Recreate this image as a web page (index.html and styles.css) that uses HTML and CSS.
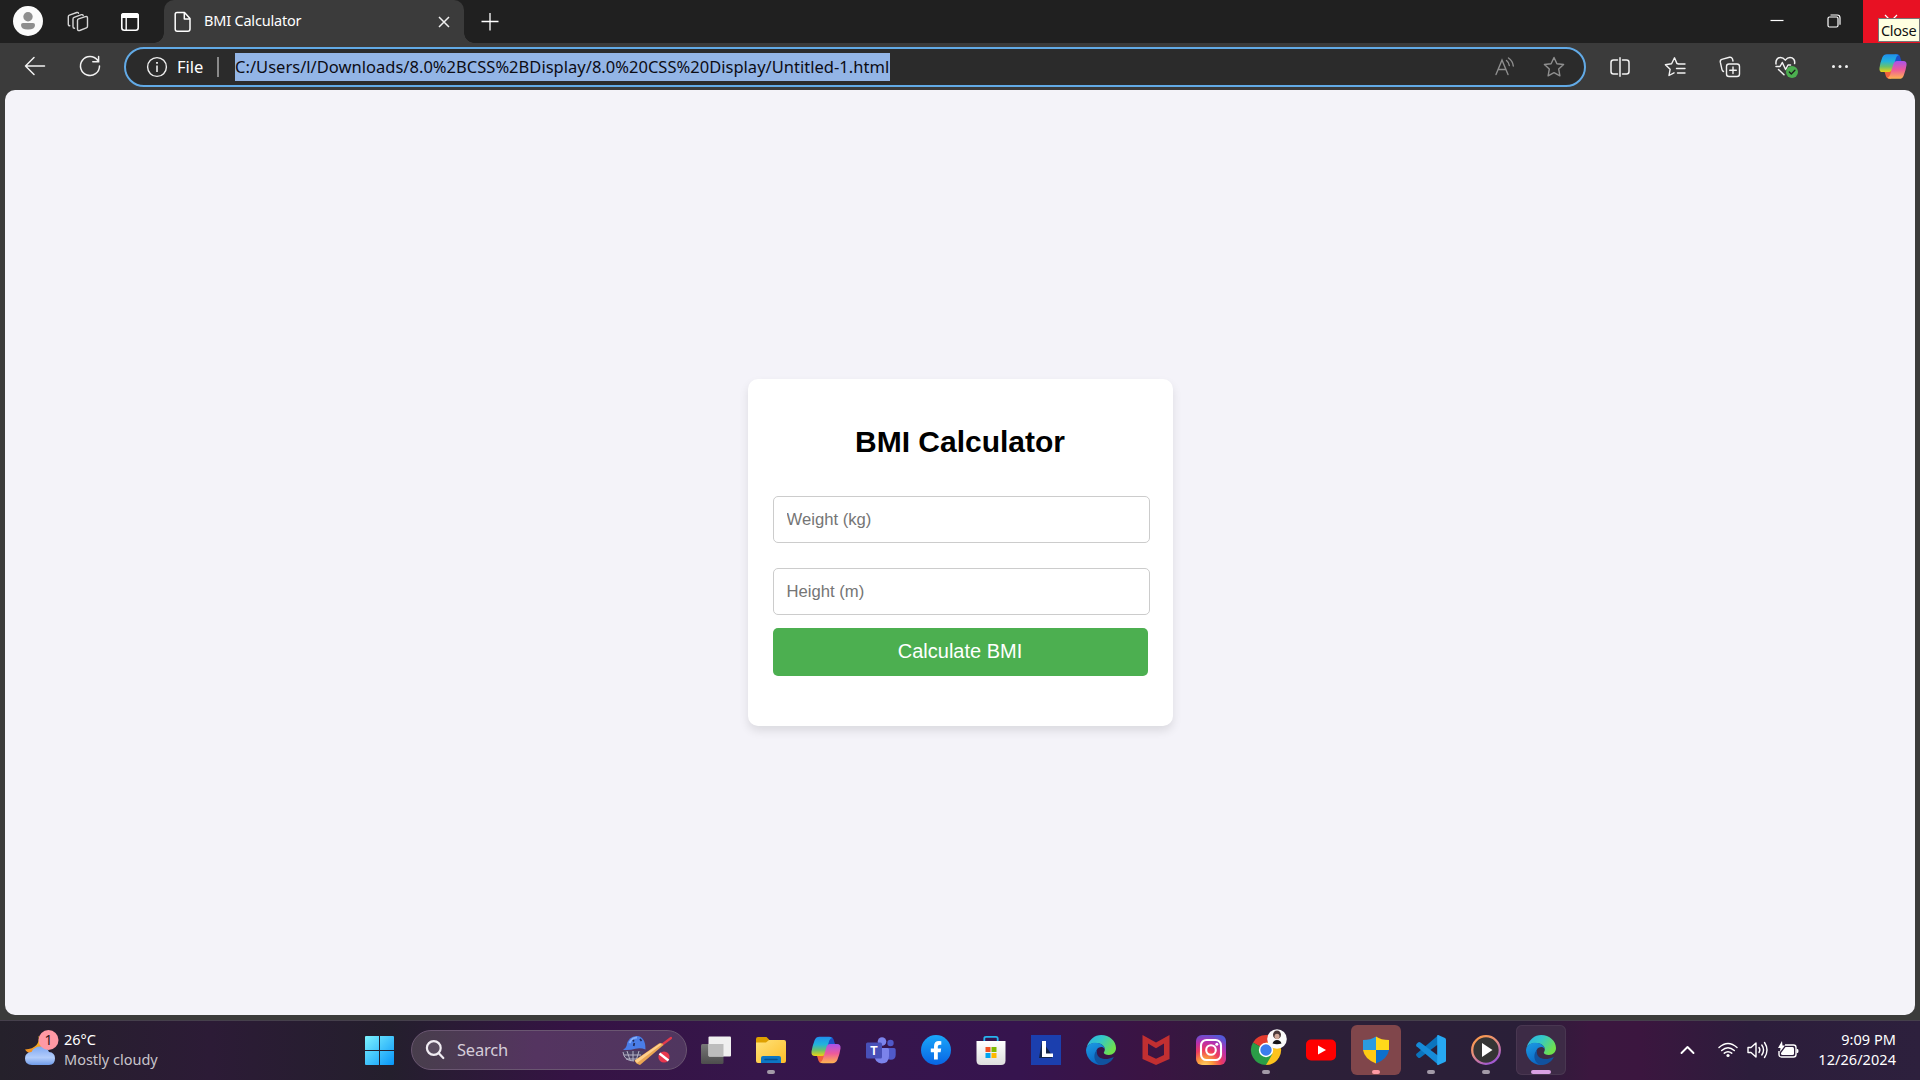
FILE: index.html
```html
<!DOCTYPE html>
<html lang="en">
<head>
<meta charset="utf-8">
<title>BMI Calculator</title>
<link rel="stylesheet" href="styles.css">
</head>
<body>
<svg class="defs" width="0" height="0">
  <defs>
    <linearGradient id="cpBlue" x1="0" y1="0" x2="0" y2="1"><stop offset="0" stop-color="#1f8fee"/><stop offset=".4" stop-color="#22b3dc"/><stop offset=".7" stop-color="#6cc16a"/><stop offset="1" stop-color="#f0d313"/></linearGradient>
    <linearGradient id="cpPink" x1="0" y1="0" x2="0" y2="1"><stop offset="0" stop-color="#a753ec"/><stop offset=".5" stop-color="#ee5a9a"/><stop offset="1" stop-color="#ffb54f"/></linearGradient>
    <linearGradient id="edgeTop" x1="0" y1="0" x2="1" y2=".5"><stop offset="0" stop-color="#2cb0e8"/><stop offset=".5" stop-color="#34c8c8"/><stop offset="1" stop-color="#6fe04e"/></linearGradient>
    <linearGradient id="edgeLow" x1="0" y1="0" x2=".4" y2="1"><stop offset="0" stop-color="#1c9be4"/><stop offset="1" stop-color="#0b68c4"/></linearGradient>
    <linearGradient id="winG" x1="0" y1="0" x2="29" y2="29" gradientUnits="userSpaceOnUse"><stop offset="0" stop-color="#7df3ff"/><stop offset="1" stop-color="#0795f8"/></linearGradient>
    <radialGradient id="igG" cx=".3" cy="1.05" r="1.1"><stop offset="0" stop-color="#ffd86b"/><stop offset=".25" stop-color="#fb9a3c"/><stop offset=".5" stop-color="#ee3b5f"/><stop offset=".75" stop-color="#b92fae"/><stop offset="1" stop-color="#5558d8"/></radialGradient>
    <linearGradient id="folderG" x1="0" y1="0" x2="1" y2="1"><stop offset="0" stop-color="#ffe27a"/><stop offset="1" stop-color="#fdbd28"/></linearGradient>
    <linearGradient id="fbG" x1="0" y1="0" x2="0" y2="1"><stop offset="0" stop-color="#1aa6fa"/><stop offset="1" stop-color="#0864e4"/></linearGradient>
    <linearGradient id="bagG" x1="0" y1="0" x2="0" y2="1"><stop offset="0" stop-color="#ffffff"/><stop offset="1" stop-color="#dedede"/></linearGradient>
    <linearGradient id="ringG" x1="0" y1="0" x2=".6" y2="1"><stop offset="0" stop-color="#ff9b3f"/><stop offset=".5" stop-color="#e8907c"/><stop offset="1" stop-color="#a259d0"/></linearGradient>
    <linearGradient id="cloudG" x1="0" y1="0" x2="0" y2="1"><stop offset="0" stop-color="#7fa8f2"/><stop offset=".6" stop-color="#b3cdfb"/><stop offset="1" stop-color="#6f9be8"/></linearGradient>
    <linearGradient id="moonG" x1="0" y1="0" x2="0" y2="1"><stop offset="0" stop-color="#fac21c"/><stop offset="1" stop-color="#f08a24"/></linearGradient>
    <linearGradient id="greyG" x1="0" y1="0" x2="0" y2="1"><stop offset="0" stop-color="#777"/><stop offset="1" stop-color="#4d4d4d"/></linearGradient>
    <symbol id="copilot" viewBox="0 0 30 28">
      <path d="M17 1h2.500q2.300 0 3 2.200l1.300 4.300q.5 1.500 2 1.500h-6q-3 0-4 3z" fill="#1c50c8"/>
      <path d="M13 27h-2.500q-2.300 0-3-2.200l-1.300-4.300Q5.800 19 4.200 19h6q3 0 4-3z" fill="#f0623c"/>
      <path d="M8.500.8H18q2 0 3 1.200-2 .4-2.800 2.800L14.500 17q-.8 3-3.500 3H4Q0 20 .5 15.500 1 11 3.600 4.200 5 .8 8.500.8z" fill="url(#cpBlue)"/>
      <path d="M21.500 27.200H12q-2 0-3-1.200 2-.4 2.800-2.800L15.500 11q.8-3 3.500-3h7q4 0 3.500 4.500-.5 4.500-3.100 11.300-1.400 3.400-4.900 3.400z" fill="url(#cpPink)"/>
    </symbol>
    <symbol id="edge" viewBox="0 0 30 30">
      <path d="M1 11.500C3 4.800 8.700 0 15.200 0 23.500 0 30 6 30 13c0 4-3 7-7.200 7-3 0-5-1-5-2.200 0-.8 1-1.300 1-3.300C18.800 10.500 14.500 8 10 8 5.500 8 2 9.500 0 14z" fill="url(#edgeTop)"/>
      <path d="M0 15C.5 10.300 4.800 7.700 9.500 7.700c5 0 9.300 2.800 9.300 6.800-.8-2-2.300-2.500-3.600-2.500-3.200 0-5.200 2.800-5.200 6 0 5.200 4.200 11 7.800 11.700A15 15 0 0 1 0 15z" fill="url(#edgeLow)"/>
      <path d="M11.300 14.500C9 22.500 17 24.500 21.300 24c2.700-.4 5-1.400 6.500-2C25.500 27 20.500 30.300 15 30 7.500 28.500 6.500 18.500 11.300 14.500z" fill="#11529e"/>
    </symbol>
  </defs>
</svg>

<div class="browser">
  <div class="titlebar">
    <svg class="avatar" width="30" height="30" viewBox="0 0 30 30"><circle cx="15" cy="15" r="15" fill="#fbfbfb"/><circle cx="15" cy="10.700" r="4.700" fill="#8e8e8e"/><path d="M10 17h10q2 0 2 2 0 4.500-7 4.500T8 19q0-2 2-2z" fill="#8e8e8e"/></svg>
    <svg class="workspaces" width="22" height="22" viewBox="0 0 22 22" fill="none" stroke="#d6d6d6" stroke-width="1.400" stroke-linejoin="round" stroke-linecap="round"><path d="M10.500 9.500q0-1.200 1.100-1.600l6.700-2.300q2.200-.6 2.200 1.400v8.300q0 1.200-1.100 1.600l-6.700 2.600q-2.200.6-2.200-1.400z"/><path d="M7.500 17.300q-1.500 0-1.500-1.500V8q0-1.200 1.100-1.600L14.500 3.700q1.300-.4 1.700.8"/><path d="M2.800 14.800q-1.500 0-1.500-1.500V5.800q0-1.200 1.100-1.600L9.800 1.500q1.300-.4 1.700.8"/></svg>
    <svg class="tab-actions" width="20" height="20" viewBox="0 0 20 20"><rect x="1.800" y="1.800" width="16.400" height="16.400" rx="2.500" fill="none" stroke="#fff" stroke-width="1.600"/><path d="M1 6V3.500Q1 1 3.500 1h13Q19 1 19 3.500V6z" fill="#fff"/><path d="M6.200 6v12" stroke="#fff" stroke-width="1.400"/></svg>
    <div class="tab">
      <svg width="18" height="22" viewBox="0 0 18 22" fill="none" stroke="#fff" stroke-width="1.500" stroke-linejoin="round"><path d="M3 1.500h7.500l5.500 6V18q0 2.300-2.200 2.300H3.200Q1.200 20.300 1.200 18V3.500Q1.200 1.500 3 1.500zM10.300 1.800V8H16"/></svg>
      <span class="tab-title">BMI Calculator</span>
      <svg class="tab-close" width="12" height="12" viewBox="0 0 12 12" stroke="#f0f0f0" stroke-width="1.500"><path d="M1 1l10 10M11 1L1 11"/></svg>
    </div>
    <svg class="new-tab" width="18" height="18" viewBox="0 0 18 18" stroke="#fff" stroke-width="1.300"><path d="M.5 8.500h17M9 0v17.500"/></svg>
    <div class="window-buttons">
      <div class="window-button"><svg width="14" height="14" viewBox="0 0 14 14" stroke="#fff" stroke-width="1.200"><path d="M.5 6.500h13"/></svg></div>
      <div class="window-button"><svg width="14" height="14" viewBox="0 0 14 14" fill="none" stroke="#fff" stroke-width="1.200"><rect x="1" y="3" width="10" height="10" rx="1.500"/><path d="M3.500 1h6.700q2.800 0 2.800 2.800v7"/></svg></div>
      <div class="window-button close"><svg width="14" height="14" viewBox="0 0 14 14" stroke="#fff" stroke-width="1.200"><path d="M1 1l12 12M13 1L1 13"/></svg><span class="tooltip">Close</span></div>
    </div>
  </div>

  <div class="toolbar">
    <div class="nav-button"><svg width="22" height="20" viewBox="0 0 22 20" fill="none" stroke="#f2f2f2" stroke-width="1.500" stroke-linecap="round" stroke-linejoin="round"><path d="M20.500 10H1.500M10 1.500L1.500 10l8.500 8.500"/></svg></div>
    <div class="nav-button"><svg width="22" height="22" viewBox="0 0 22 22" fill="none" stroke="#f2f2f2" stroke-width="1.500" stroke-linecap="round"><path d="M20.500 11A9.500 9.500 0 1 1 18.600 5.300M19.600 1.500v5.300h-5.800"/></svg></div>
    <div class="address">
      <svg width="22" height="22" viewBox="0 0 22 22" fill="none" stroke="#eee" stroke-width="1.400"><circle cx="11" cy="11" r="9.400"/><path d="M11 9.500v6.500" stroke-width="1.600"/><path d="M11 6v1.800" stroke-width="1.800"/></svg>
      <span class="scheme">File</span>
      <span class="separator"></span>
      <span class="url">C:/Users/l/Downloads/8.0%2BCSS%2BDisplay/8.0%20CSS%20Display/Untitled-1.html</span>
      <svg class="read-aloud" width="20" height="20" viewBox="0 0 20 20" fill="none" stroke="#8f8f8f" stroke-width="1.400" stroke-linecap="round"><path d="M1 17.500L7 3l6 14.500M3 12.500h8M11.500 3.500q2.500 2 2.800 5M13.500 1q4.300 3 4.800 8"/></svg>
      <svg class="star" width="22" height="22" viewBox="0 0 22 22" fill="none" stroke="#8f8f8f" stroke-width="1.400" stroke-linejoin="round"><path d="M11 1.500l2.900 6.200 6.700.8-4.900 4.600 1.200 6.700-5.900-3.200-5.900 3.200 1.200-6.700L1.400 8.500l6.700-.8z"/></svg>
    </div>
    <div class="tool"><svg width="20" height="20" viewBox="0 0 20 20" fill="none" stroke="#f2f2f2" stroke-width="1.500" stroke-linecap="round"><path d="M7.500 3h-4Q1 3 1 5.500v9Q1 17 3.500 17h4M12.500 3h4Q19 3 19 5.500v9q0 2.500-2.500 2.500h-4M10 .800v18.400"/></svg></div>
    <div class="tool"><svg width="22" height="22" viewBox="0 0 22 22" fill="none" stroke="#f2f2f2" stroke-width="1.400" stroke-linejoin="round" stroke-linecap="round"><path d="M14 7.800l-1-.2-2.500-5.800-2.900 6-6.200.9 4.700 4.600-1.100 6.200 5-2.700M14 8h7M12.500 12.500H21M13.500 17H21"/></svg></div>
    <div class="tool"><svg width="22" height="22" viewBox="0 0 22 22" fill="none" stroke="#f2f2f2" stroke-width="1.400" stroke-linecap="round"><rect x="7.500" y="8" width="13" height="12.500" rx="2.500"/><path d="M14 11v6.500M10.700 14.200h6.600M4.500 15.500q-1.200-.5-1.500-1.800L1.300 6.200q-.4-2.200 1.500-2.900L10.500 1.300q2.100-.4 2.900 1.500l.6 2.200"/></svg></div>
    <div class="tool"><svg class="heart" width="26" height="24" viewBox="0 0 26 24" fill="none" stroke="#f2f2f2" stroke-width="1.500" stroke-linejoin="round" stroke-linecap="round"><path d="M2 9C1.500 5 3.500 2.500 6.500 2.500c2.200 0 3.500 1 4.800 2.600C12.600 3.500 14 2.500 16 2.500c3.200 0 5.200 2.600 4.600 6M2 11.500h4l2.300-4 3.300 7 2.400-4.500h2.500M4.500 14.500l5.500 5.300"/><circle cx="18" cy="17" r="6" fill="#4caf50" stroke="none"/><path d="M15.300 17l2 2 3.600-3.800" stroke="#1d1d1d" stroke-width="1.300"/></svg></div>
    <div class="tool"><svg width="18" height="6" viewBox="0 0 18 6" fill="#f2f2f2"><circle cx="2.500" cy="2.500" r="1.500"/><circle cx="9" cy="2.500" r="1.500"/><circle cx="15.500" cy="2.500" r="1.500"/></svg></div>
    <div class="tool"><svg width="28" height="27"><use href="#copilot"/></svg></div>
  </div>

  <main class="page">
    <form class="card">
      <h2>BMI Calculator</h2>
      <input class="field" type="text" placeholder="Weight (kg)">
      <input class="field" type="text" placeholder="Height (m)">
      <button class="submit" type="button">Calculate BMI</button>
    </form>
  </main>
</div>

<div class="taskbar">
  <div class="weather">
    <svg width="36" height="38" viewBox="0 0 36 38"><path d="M14.500 7c1.500 7-3 13-13.500 13.500 3 5 12 6 16-1S17 8.500 14.500 7z" fill="url(#moonG)"/><path d="M8 36q-7 0-7-6.500 0-6 6.500-6.500 2.500-5.500 9-5.500 6.500 0 8.500 5.500 6 .5 6 6.500T25 36z" fill="url(#cloudG)"/><circle cx="24.500" cy="11" r="10" fill="#ff99a4"/><text x="24.500" y="16" class="badge-number" text-anchor="middle">1</text></svg>
    <div class="weather-text"><span class="temp">26°C</span><span class="condition">Mostly cloudy</span></div>
  </div>
  <svg class="start" width="29" height="29" viewBox="0 0 29 29" fill="url(#winG)"><path d="M1 0h13v14H0V1q0-1 1-1zM15 0h13q1 0 1 1v13H15zM0 15h14v14H1q-1 0-1-1zM15 15h14v13q0 1-1 1H15z"/></svg>
  <div class="search">
    <svg width="20" height="20" viewBox="0 0 20 20" fill="none" stroke="#f0ecf2" stroke-width="2.200" stroke-linecap="round"><circle cx="8.800" cy="8" r="6.900" fill="#5a4d60"/><path d="M13.800 13.200l4.500 4.800"/></svg>
    <span class="search-label">Search</span>
    <svg class="cricket" width="50" height="30" viewBox="0 0 50 30"><path d="M1 16q0 9 10 10h6l5-10z" fill="#4b4264"/><path d="M1 17q1 9 11 9M5 16l3 9M11 16v10M17 16l-3 10M2 20h17M4 24h14" stroke="#b4b2c5" stroke-width="1" fill="none"/><path d="M1 14.800Q4 13 4.500 11 6 1 15 1q8.500.5 8.500 13.500-5-2-10-.8-6 1.800-12.500 1.100z" fill="#4a7de8"/><path d="M7.500 8q2.500-5.500 7.500-5.500" stroke="#85adfa" stroke-width="2" fill="none"/><path d="M11 5l.8 1.500M12.300 8l-.6 3M18 4l1.500 2" stroke="#222c5c" stroke-width="1.700" fill="none"/><path d="M41 9l8-6" stroke="#e33a4c" stroke-width="2.200" stroke-linecap="round"/><path d="M12.500 25.500L37 8.500q3-1.500 4.500 1.500L18 30q-4-1-5.500-4.500z" fill="#eaa653"/><path d="M13 25.500L38 8.500l1.500 1L15 28z" fill="#ffd08c"/><circle cx="42" cy="22" r="5.600" fill="#e8374e"/><path d="M37.500 18.500l9 7" stroke="#fff" stroke-width="2.400"/></svg>
  </div>
  <div class="apps">
    <div class="app"><svg width="30" height="28" viewBox="0 0 30 28"><rect y="8" width="22.500" height="20" rx="1.500" fill="url(#greyG)"/><rect x="7.500" y=".5" width="22.500" height="20" rx="1" fill="#f0f0f0"/><path d="M7.500 8h15v12.500H8.500q-1 0-1-1z" fill="#bdbdbd"/></svg></div>
    <div class="app running"><svg width="30" height="28" viewBox="0 0 30 28"><path d="M0 3q0-2 2-2h8.500l3 3H28v9H0z" fill="#dfa000"/><path d="M0 6.500h10l3-2.500h15q2 0 2 2v19q0 2-2 2H2q-2 0-2-2z" fill="url(#folderG)"/><path d="M5 27v-5q0-2 2-2h16q2 0 2 2v5z" fill="#0d76c4"/><path d="M9 23.500h12" stroke="#07508e" stroke-width="1.500" stroke-linecap="round"/></svg></div>
    <div class="app"><svg width="30" height="28"><use href="#copilot"/></svg></div>
    <div class="app"><svg width="30" height="28" viewBox="0 0 30 28"><circle cx="24.500" cy="7" r="3.200" fill="#5059c9"/><path d="M20 12h8q1.700 0 1.700 1.700v5q0 5-5 5-3 0-4.700-2z" fill="#5059c9"/><circle cx="16" cy="5.500" r="4.300" fill="#7b83eb"/><path d="M9 12h12.500q1.500 0 1.500 1.500V20q0 7.500-7.500 7.500Q9 27 8.500 20z" fill="#7b83eb"/><rect y="6.500" width="16" height="16" rx="1.500" fill="#4850b8"/><text x="8" y="19" class="teams-letter" text-anchor="middle">T</text></svg></div>
    <div class="app"><svg width="30" height="30" viewBox="0 0 30 30"><circle cx="15" cy="15" r="15" fill="url(#fbG)"/><path d="M13 24.500v-7.300H9.800v-3.700H13v-2.200q0-5.300 5-5.300 1.200 0 2.300.3v3.400h-1.500q-2 0-2 1.900v1.900h3.400l-.6 3.700h-2.800v7.300z" fill="#fff"/></svg></div>
    <div class="app"><svg width="30" height="30" viewBox="0 0 30 30"><path d="M8.300 7V3.500q0-1.700 1.700-1.700h10q1.700 0 1.700 1.700V7" fill="none" stroke="#27b4ee" stroke-width="1.800"/><path d="M.5 6h29v19.500q0 4.500-4.500 4.500H5Q.5 30 .5 25.500z" fill="url(#bagG)"/><path d="M9.500 12h5v5h-5z" fill="#f25022"/><path d="M15.500 12h5v5h-5z" fill="#7fba00"/><path d="M9.500 18h5v5h-5z" fill="#00a4ef"/><path d="M15.500 18h5v5h-5z" fill="#ffb900"/></svg></div>
    <div class="app"><svg width="30" height="30" viewBox="0 0 30 30"><rect width="30" height="30" fill="#1b3fae"/><path d="M11 6L8 23h13v-3z" fill="#122447"/><path d="M11 6h4v12.500h7V22H11z" fill="#fff"/></svg></div>
    <div class="app"><svg width="30" height="30"><use href="#edge"/></svg></div>
    <div class="app"><svg width="28" height="30" viewBox="0 0 28 30"><path d="M.5 0L14 7.500 27.500 0v24L14 30 .5 24zM6 8.500V20l8 3.700 8-3.700V8.500l-8 4.800z" fill="#c12f31" fill-rule="evenodd"/></svg></div>
    <div class="app"><svg width="30" height="30" viewBox="0 0 30 30"><rect width="30" height="30" rx="6" fill="url(#igG)"/><g fill="none" stroke="#fff" stroke-width="2.100"><rect x="5" y="5" width="20" height="20" rx="5.500"/><circle cx="15" cy="15" r="4.800"/></g><circle cx="20.800" cy="9.200" r="1.500" fill="#fff"/></svg></div>
    <div class="app running"><svg class="chrome" width="36" height="36" viewBox="0 0 36 36"><path d="M15 21L2 13.500A15 15 0 0 1 28 13.500z" fill="#e33b2e"/><path d="M15 21V13.500h13A15 15 0 0 1 15 36z" fill="#fcc31e"/><path d="M15 21l6.500 3.800L15 36A15 15 0 0 1 2 13.500z" fill="#2a9d47"/><circle cx="15" cy="21" r="7.200" fill="#fff"/><circle cx="15" cy="21" r="5.700" fill="#3b7ded"/><circle cx="26" cy="10" r="9.800" fill="#fbfafa"/><path d="M21.500 14.500q1-3.500 4.500-3.500t4.500 3.500q-4.500 1.500-9 0z" fill="#161417"/><ellipse cx="26" cy="5.800" rx="4" ry="4.300" fill="#4a3838"/><ellipse cx="26" cy="7.500" rx="2.500" ry="2.800" fill="#d0a898"/></svg></div>
    <div class="app"><svg width="30" height="22" viewBox="0 0 30 22"><rect y=".5" width="30" height="21" rx="5" fill="#f00"/><path d="M12 6.500l8 4.500-8 4.500z" fill="#fff"/></svg></div>
    <div class="app running alert"><svg width="26" height="28" viewBox="0 0 26 28"><path d="M13 .5Q8 4 0 4v10h13z" fill="#2a9be0"/><path d="M13 .5Q18 4 26 4v10H13z" fill="#ffd91a"/><path d="M0 14q1.500 9 13 13.500V14z" fill="#ffcb14"/><path d="M26 14q-1.500 9-13 13.500V14z" fill="#0c70cc"/></svg></div>
    <div class="app running"><svg width="30" height="30" viewBox="0 0 30 30"><path d="M22.500 0v9L4.500 22.500Q3 23.500 2 22.500L.5 21q-1-1.200 0-2.200z" fill="#0b74bd"/><path d="M22.500 30v-9L4.500 7.500Q3 6.500 2 7.500L.5 9q-1 1.200 0 2.200z" fill="#168bd8"/><path d="M22.200 0L29 3q1 .5 1 1.500v21q0 1-1 1.500l-6.800 3q-1 .3-1-.8V.800q0-1 1-.8z" fill="#27a8f2"/></svg></div>
    <div class="app running"><svg width="30" height="30" viewBox="0 0 30 30"><circle cx="15" cy="15" r="13.800" fill="#353535" stroke="url(#ringG)" stroke-width="2.300"/><path d="M11 8l10.500 7L11 22z" fill="#fff"/></svg></div>
    <div class="app running active"><svg width="30" height="30"><use href="#edge"/></svg></div>
  </div>
  <div class="tray">
    <svg class="chevron" width="15" height="10" viewBox="0 0 15 10" fill="none" stroke="#fff" stroke-width="1.900" stroke-linecap="round" stroke-linejoin="round"><path d="M1.500 8l6-6 6 6"/></svg>
    <svg class="wifi" width="20" height="16" viewBox="0 0 20 16" fill="none" stroke="#fff" stroke-width="1.500" stroke-linecap="round"><path d="M1 5.500q9-8 18 0M3.700 8.500q6.300-5.500 12.600 0M6.300 11.200q3.700-3 7.400 0"/><circle cx="10" cy="13.500" r="1.600" fill="#fff" stroke="none"/></svg>
    <svg class="speaker" width="22" height="18" viewBox="0 0 22 18" fill="none" stroke="#fff" stroke-width="1.400" stroke-linecap="round" stroke-linejoin="round"><path d="M1 6.500h3L9 2v14l-5-4.500H1zM12 6.500q1.800 2.500 0 5M14.800 4q3.500 5 0 10M17.500 1.500q5 7.500 0 15"/></svg>
    <svg class="battery" width="21" height="18" viewBox="0 0 21 18"><path d="M7 4h8.500q2.500 0 2.500 2.500v7Q18 16 15.500 16h-12Q1 16 1 13.500V10" fill="none" stroke="#fff" stroke-width="1.400"/><path d="M7.500 6h7q1.500 0 1.500 1.500v5q0 1.500-1.500 1.500H4.500Q3 14 3 12.500V12z" fill="#fff"/><path d="M18.500 8h1q1 0 1 2t-1 2h-1zM4 0L0 7h2.500L2 11l5-6.500H4.500z" fill="#fff"/></svg>
    <div class="clock"><span class="time">9:09 PM</span><span class="date">12/26/2024</span></div>
  </div>
</div>
</body>
</html>
```
FILE: styles.css
```css
* { box-sizing: border-box; }
body { margin: 0; width: 1920px; height: 1080px; overflow: hidden; display: flex; flex-direction: column; background: #3b3b3b; font-family: "Noto Sans", "Open Sans", sans-serif; color: #fff; }
svg { display: block; flex: none; overflow: visible; }
.defs { position: absolute; }
span { white-space: nowrap; }

.browser { height: 1020px; display: flex; flex-direction: column; }
.titlebar { height: 43px; display: flex; align-items: center; background: #202020; padding-left: 13px; }
.avatar { margin-bottom: 1px; }
.workspaces { margin-left: 24px; }
.tab-actions { margin-left: 31px; }
.tab { position: relative; width: 300px; height: 43px; margin-left: 24px; padding: 0 14px 0 10px; display: flex; align-items: center; background: #3b3b3b; border-radius: 10px 10px 0 0; }
.tab::before, .tab::after { content: ""; position: absolute; bottom: 0; width: 10px; height: 10px; }
.tab::before { left: -10px; background: radial-gradient(circle at 0 0, #202020 9.500px, #3b3b3b 10px); }
.tab::after { right: -10px; background: radial-gradient(circle at 100% 0, #202020 9.500px, #3b3b3b 10px); }
.tab-title { margin-left: 12px; font-size: 14.500px; letter-spacing: -0.200px; line-height: 20px; margin-bottom: 3px; }
.tab-close { margin-left: auto; }
.new-tab { margin-left: 17px; }
.window-buttons { display: flex; margin-left: auto; }
.window-button { width: 57px; height: 43px; padding: 0 2px 1px 0; display: flex; align-items: center; justify-content: center; }
.close { position: relative; background: #e81123; }
.tooltip { position: absolute; left: 15px; top: 18px; width: 42px; height: 24px; border: 1px solid #767676; background: #ffffe1; color: #111; font-size: 14.500px; letter-spacing: -0.300px; line-height: 23px; padding-left: 2px; }

.toolbar { height: 47px; display: flex; align-items: center; padding-left: 8px; }
.nav-button { width: 55px; height: 46px; padding: 0 2px 1px 0; display: flex; align-items: center; justify-content: center; }
.address { width: 1462px; height: 40px; margin: 0 6px; padding: 0 19px 0 20px; border: 2px solid #62aae6; border-radius: 20px; background: #2b2b2b; display: flex; align-items: center; }
.scheme { margin-left: 9px; width: 40px; font-size: 16.500px; letter-spacing: 0; }
.separator { width: 2px; height: 20px; background: #8a8a8a; }
.url { margin-left: 16px; width: 655px; height: 28px; line-height: 27px; background: #93b5e6; color: #0c0c14; font-size: 16.500px; letter-spacing: 0.020px; }
.read-aloud { margin-left: auto; }
.star { margin-left: 28px; }
.tool { width: 55px; height: 46px; display: flex; align-items: center; justify-content: center; }
.tool:last-child { width: 53px; padding: 0 2px 1px 0; }
.heart { margin-left: 4px; }

.page { height: 925px; margin: 0 5px; background: #f4f3f9; border-radius: 10px; display: flex; align-items: center; justify-content: center; font-family: "Liberation Sans", Arial, sans-serif; }
.card { width: 425px; height: 347px; padding: 25px; background: #fff; border-radius: 10px; box-shadow: 0 5px 10px rgba(0, 0, 0, .1); display: flex; flex-direction: column; color: #000; }
.card h2 { margin: 20px 0 37px; font-size: 30px; line-height: 35px; text-align: center; }
.field { flex: none; width: 377px; height: 47px; margin: 0 0 25px; padding: 0 12px 0 13px; border: 1px solid #ccc; border-radius: 5px; font-family: inherit; font-size: 16.670px; }
.field::placeholder { color: #757575; }
.submit { height: 48px; margin: -12px 0 0; padding: 0 0 2px; border: 0; border-radius: 5px; background: #4caf50; color: #fff; font-family: inherit; font-size: 20px; }

.taskbar { height: 60px; display: flex; align-items: center; padding-bottom: 1px; border-top: 1px solid #46404c; background: linear-gradient(90deg, #25212b 0, #2c1b36 210px, #241f2d 390px, #351344 570px, #36164b 760px, #36144e 1020px, #3a1443 1150px, #2d1f38 1280px, #2a1f38 1520px, #3b173f 1590px, #3b163f 1640px, #2c1d3b 1750px, #2d203d 1920px); }
.weather { width: 341px; margin-left: 24px; display: flex; padding-bottom: 2px; }
.weather-text { display: flex; flex-direction: column; margin-left: 4px; font-size: 14.500px; line-height: 20px; letter-spacing: 0; }
.condition { color: #c8c4cb; }
.badge-number { font-size: 14px; fill: #30161a; }
.start { margin-top: 1px; }
.search { width: 276px; height: 40px; margin-left: 17px; padding: 0 14px 1px 13px; border-radius: 20px; border: 1px solid #6a5671; background: linear-gradient(90deg, #483e4c, #543460 45%, #50365f); display: flex; align-items: center; }
.search-label { margin-left: 12px; font-size: 16.500px; letter-spacing: -0.200px; color: #d5cdd9; }
.cricket { margin-left: auto; }
.apps { display: flex; margin-left: 4px; gap: 5px; }
.app { position: relative; width: 50px; height: 50px; display: flex; align-items: center; justify-content: center; border-radius: 6px; }
.running::after { content: ""; position: absolute; left: 21px; bottom: 1px; width: 8px; height: 4px; border-radius: 2px; background: #a39aa8; }
.alert { background: #80464b; }
.alert::after { background: #ff99a4; }
.active { background: #3d2b46; box-shadow: inset 0 0 0 1px #493751; }
.active::after { left: 15px; width: 20px; background: #d9a0e4; }
.chrome { margin: -6px 0 0 6px; }
.teams-letter { font: bold 12px "Liberation Sans", sans-serif; fill: #fff; }
.tray { flex: 1; display: flex; align-items: center; padding-right: 24px; }
.chevron { margin-left: 114px; }
.wifi { margin-left: 23px; }
.speaker { margin-left: 9px; }
.battery { margin-left: 9px; }
.clock { margin-left: auto; display: flex; flex-direction: column; align-items: flex-end; font-size: 14.500px; line-height: 20px; letter-spacing: 0.050px; padding-bottom: 2px; }
```
